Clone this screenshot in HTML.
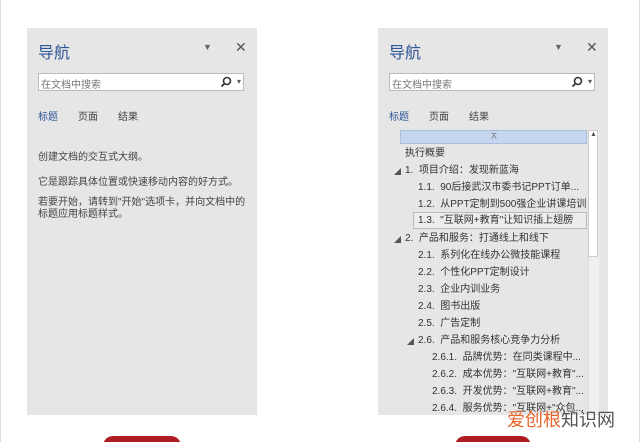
<!DOCTYPE html>
<html><head><meta charset="utf-8"><style>
html,body{margin:0;width:640px;height:442px;overflow:hidden;}
body{background:#fff;position:relative;font-family:"Liberation Sans","Noto Sans CJK SC",sans-serif;}
.p{position:absolute;top:28px;width:230px;height:387px;background:#e6e6e6;}
.a{position:absolute;white-space:nowrap;}
.t{font-size:16px;color:#2f5597;}
.s{font-size:10px;color:#444;}
.box{position:absolute;height:18px;width:206px;background:#fff;border:1px solid #bbb;box-sizing:border-box;}
.r{position:absolute;font-size:10px;color:#333;white-space:nowrap;line-height:12px;}
.tri{position:absolute;font-size:7px;color:#555;}
</style></head><body>
<div style="position:absolute;left:0;top:0;width:1px;height:442px;background:#ddd"></div>
<div style="position:absolute;right:0;top:0;width:1px;height:442px;background:#ddd"></div>

<div class="p" style="left:27px"></div>
<div class="a t" style="left:38px;top:39px">导航</div>
<div class="a" style="left:203px;top:42px;font-size:9px;color:#666">▼</div>
<div class="a" style="left:235px;top:39px;font-size:14px;color:#555">✕</div>
<div class="box" style="left:38px;top:73px"></div>
<div class="a s" style="left:41px;top:76px;color:#777">在文档中搜索</div>
<svg style="position:absolute;left:220px;top:76px" width="12" height="12"><circle cx="7" cy="5" r="3.5" fill="none" stroke="#333" stroke-width="1.6"/><line x1="4.5" y1="7.5" x2="1.5" y2="10.5" stroke="#333" stroke-width="1.8"/></svg>
<div class="a" style="left:237px;top:77px;font-size:8px;color:#555">▾</div>
<div class="a s" style="left:38px;top:108px;color:#2f5597">标题</div>
<div class="a s" style="left:78px;top:108px">页面</div>
<div class="a s" style="left:118px;top:108px">结果</div>
<div class="a s" style="left:38px;top:148px">创建文档的交互式大纲。</div>
<div class="a s" style="left:38px;top:173px">它是跟踪具体位置或快速移动内容的好方式。</div>
<div class="a s" style="left:38px;top:197px;line-height:12px">若要开始，请转到"开始"选项卡，并向文档中的<br>标题应用标题样式。</div>

<div class="p" style="left:378px"></div>
<div class="a t" style="left:389px;top:39px">导航</div>
<div class="a" style="left:554px;top:42px;font-size:9px;color:#666">▼</div>
<div class="a" style="left:586px;top:39px;font-size:14px;color:#555">✕</div>
<div class="box" style="left:389px;top:73px"></div>
<div class="a s" style="left:392px;top:76px;color:#777">在文档中搜索</div>
<svg style="position:absolute;left:571px;top:76px" width="12" height="12"><circle cx="7" cy="5" r="3.5" fill="none" stroke="#333" stroke-width="1.6"/><line x1="4.5" y1="7.5" x2="1.5" y2="10.5" stroke="#333" stroke-width="1.8"/></svg>
<div class="a" style="left:588px;top:77px;font-size:8px;color:#555">▾</div>
<div class="a s" style="left:389px;top:108px;color:#2f5597">标题</div>
<div class="a s" style="left:429px;top:108px">页面</div>
<div class="a s" style="left:469px;top:108px">结果</div>

<div style="position:absolute;left:400px;top:130px;width:187px;height:14px;background:#c5d6ee;border:1px solid #a8bfdf;box-sizing:border-box"></div>
<div class="a" style="left:490px;top:131px;font-size:8px;color:#444">⌅</div>
<div style="position:absolute;left:588px;top:130px;width:10px;height:284px;background:#f0f0f0;border-left:1px solid #ddd"></div>
<div style="position:absolute;left:588px;top:130px;width:10px;height:127px;background:#fff;border:1px solid #ccc;box-sizing:border-box"></div>
<div class="a" style="left:590px;top:131px;font-size:7px;color:#555">▲</div>
<div style="position:absolute;left:413px;top:212px;width:174px;height:17px;border:1px solid #bbb;box-sizing:border-box;background:#ececec"></div>

<div class="r" style="left:405px;top:148px">执行概要</div>
<div class="tri" style="left:394px;top:167px">◢</div><div class="r" style="left:405px;top:165px">1.&nbsp; 项目介绍：发现新蓝海</div>
<div class="r" style="left:418px;top:182px">1.1.&nbsp; 90后接武汉市委书记PPT订单...</div>
<div class="r" style="left:418px;top:199px">1.2.&nbsp; 从PPT定制到500强企业讲课培训</div>
<div class="r" style="left:418px;top:215px">1.3.&nbsp; "互联网+教育"让知识插上翅膀</div>
<div class="tri" style="left:394px;top:235px">◢</div><div class="r" style="left:405px;top:233px">2.&nbsp; 产品和服务：打通线上和线下</div>
<div class="r" style="left:418px;top:250px">2.1.&nbsp; 系列化在线办公微技能课程</div>
<div class="r" style="left:418px;top:267px">2.2.&nbsp; 个性化PPT定制设计</div>
<div class="r" style="left:418px;top:284px">2.3.&nbsp; 企业内训业务</div>
<div class="r" style="left:418px;top:301px">2.4.&nbsp; 图书出版</div>
<div class="r" style="left:418px;top:318px">2.5.&nbsp; 广告定制</div>
<div class="tri" style="left:407px;top:337px">◢</div><div class="r" style="left:418px;top:335px">2.6.&nbsp; 产品和服务核心竞争力分析</div>
<div class="r" style="left:432px;top:352px">2.6.1.&nbsp; 品牌优势：在同类课程中...</div>
<div class="r" style="left:432px;top:369px">2.6.2.&nbsp; 成本优势："互联网+教育"...</div>
<div class="r" style="left:432px;top:386px">2.6.3.&nbsp; 开发优势："互联网+教育"...</div>
<div class="r" style="left:432px;top:403px">2.6.4.&nbsp; 服务优势："互联网+"众包...</div>

<div class="a" style="left:507px;top:409px;font-size:18px;line-height:22px"><span style="color:#e8642c">爱创根</span><span style="color:#555">知识网</span></div>
<div style="position:absolute;left:103px;top:436px;width:78px;height:20px;border-radius:12px;background:#b01c24"></div>
<div style="position:absolute;left:455px;top:436px;width:76px;height:20px;border-radius:12px;background:#b01c24"></div>
</body></html>
